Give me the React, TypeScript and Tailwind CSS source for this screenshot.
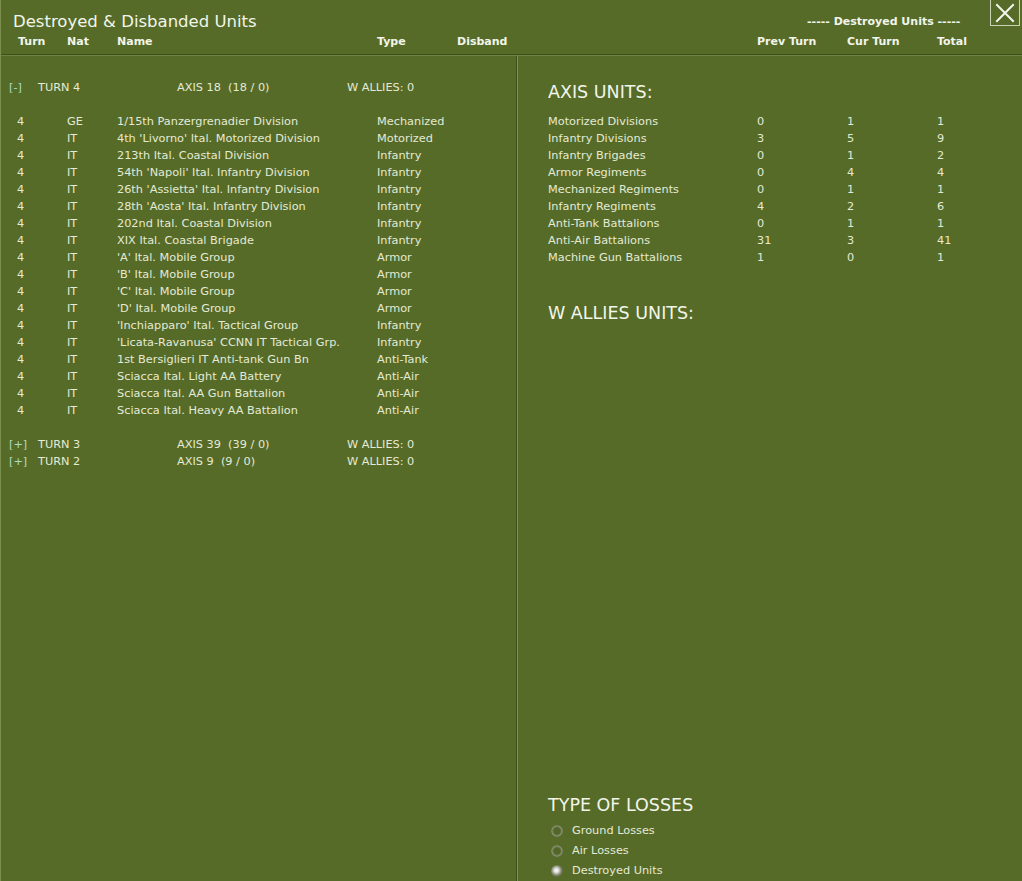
import React from "react";

type Unit = { turn: string; nat: string; name: string; type: string };

const turn4Units: Unit[] = [
  { turn: "4", nat: "GE", name: "1/15th Panzergrenadier Division", type: "Mechanized" },
  { turn: "4", nat: "IT", name: "4th 'Livorno' Ital. Motorized Division", type: "Motorized" },
  { turn: "4", nat: "IT", name: "213th Ital. Coastal Division", type: "Infantry" },
  { turn: "4", nat: "IT", name: "54th 'Napoli' Ital. Infantry Division", type: "Infantry" },
  { turn: "4", nat: "IT", name: "26th 'Assietta' Ital. Infantry Division", type: "Infantry" },
  { turn: "4", nat: "IT", name: "28th 'Aosta' Ital. Infantry Division", type: "Infantry" },
  { turn: "4", nat: "IT", name: "202nd Ital. Coastal Division", type: "Infantry" },
  { turn: "4", nat: "IT", name: "XIX Ital. Coastal Brigade", type: "Infantry" },
  { turn: "4", nat: "IT", name: "'A' Ital. Mobile Group", type: "Armor" },
  { turn: "4", nat: "IT", name: "'B' Ital. Mobile Group", type: "Armor" },
  { turn: "4", nat: "IT", name: "'C' Ital. Mobile Group", type: "Armor" },
  { turn: "4", nat: "IT", name: "'D' Ital. Mobile Group", type: "Armor" },
  { turn: "4", nat: "IT", name: "'Inchiapparo' Ital. Tactical Group", type: "Infantry" },
  { turn: "4", nat: "IT", name: "'Licata-Ravanusa' CCNN IT Tactical Grp.", type: "Infantry" },
  { turn: "4", nat: "IT", name: "1st Bersiglieri IT Anti-tank Gun Bn", type: "Anti-Tank" },
  { turn: "4", nat: "IT", name: "Sciacca Ital. Light AA Battery", type: "Anti-Air" },
  { turn: "4", nat: "IT", name: "Sciacca Ital. AA Gun Battalion", type: "Anti-Air" },
  { turn: "4", nat: "IT", name: "Sciacca Ital. Heavy AA Battalion", type: "Anti-Air" },
];

const axisTotals: [string, string, string, string][] = [
  ["Motorized Divisions", "0", "1", "1"],
  ["Infantry Divisions", "3", "5", "9"],
  ["Infantry Brigades", "0", "1", "2"],
  ["Armor Regiments", "0", "4", "4"],
  ["Mechanized Regiments", "0", "1", "1"],
  ["Infantry Regiments", "4", "2", "6"],
  ["Anti-Tank Battalions", "0", "1", "1"],
  ["Anti-Air Battalions", "31", "3", "41"],
  ["Machine Gun Battalions", "1", "0", "1"],
];

const lossTypes = [
  { label: "Ground Losses", on: false },
  { label: "Air Losses", on: false },
  { label: "Destroyed Units", on: true },
];

function TurnHeader({ open, turn, axis, allies }: { open: boolean; turn: string; axis: string; allies: string }) {
  return (
    <div className="grid h-[17px] grid-cols-[29px_139px_170px_1fr] items-center pl-[8px]">
      <span className="text-[#a9dcc4]">{open ? "[-]" : "[+]"}</span>
      <span>{turn}</span>
      <span className="whitespace-pre">{axis}</span>
      <span>{allies}</span>
    </div>
  );
}

function Radio({ on }: { on: boolean }) {
  return (
    <span
      className={
        on
          ? "h-[12px] w-[12px] rounded-full bg-[radial-gradient(circle_at_45%_45%,#ffffff_0%,#e0e0e0_22%,#7a8262_55%,#343e1a_100%)]"
          : "h-[12px] w-[12px] rounded-full bg-[radial-gradient(circle_at_50%_50%,#52662a_0%,#52662a_36%,#858f69_60%,#2f3918_100%)]"
      }
    />
  );
}

export default function App() {
  return (
    <div className="relative flex h-[881px] w-[1022px] flex-col overflow-hidden border-l border-[#7a8f4c] bg-[#566b28] font-['DejaVu_Sans',sans-serif] text-[11.3px] text-[#e4ead6]">
      {/* window header */}
      <div className="grid h-[55px] shrink-0 grid-cols-[515px_1fr] border-b border-[#3e4e1a]">
        <div className="flex flex-col pt-[10px]">
          <div className="flex h-[24px] items-center pl-[12px] text-[16.5px] leading-none text-[#f2f5ea]">
            Destroyed &amp; Disbanded Units
          </div>
          <div className="grid h-[14px] grid-cols-[49px_50px_260px_80px_1fr] items-center pl-[17px] text-[11px] font-bold text-[#f2f5ea]">
            <span>Turn</span>
            <span>Nat</span>
            <span>Name</span>
            <span>Type</span>
            <span>Disband</span>
          </div>
        </div>
        <div className="flex flex-col pt-[10px]">
          <div className="flex h-[24px] items-center pl-[291px] text-[11px] font-bold text-[#f2f5ea]">
            ----- Destroyed Units -----
          </div>
          <div className="grid h-[14px] grid-cols-[90px_90px_1fr] items-center pl-[241px] text-[11px] font-bold text-[#f2f5ea]">
            <span>Prev Turn</span>
            <span>Cur Turn</span>
            <span>Total</span>
          </div>
        </div>
      </div>
      <div className="h-px shrink-0 bg-[#6f8443]" />

      {/* close button */}
      <button className="absolute right-[2px] top-0 flex h-[26px] w-[30px] items-center justify-center border border-t-0 border-[#c9d3b3]">
        <svg width="20" height="20" viewBox="0 0 20 20">
          <path d="M2 2 L18 18 M18 2 L2 18" stroke="#f4f6ee" strokeWidth="2" strokeLinecap="square" />
        </svg>
      </button>

      <div className="flex min-h-0 flex-1">
        {/* unit list */}
        <div className="flex w-[515px] flex-col pt-[24px]">
          <TurnHeader open turn="TURN 4" axis="AXIS 18  (18 / 0)" allies="W ALLIES: 0" />
          <div className="pt-[17px]">
            {turn4Units.map((u, i) => (
              <div key={i} className="grid h-[17px] grid-cols-[50px_50px_260px_1fr] items-center pl-[16px]">
                <span>{u.turn}</span>
                <span>{u.nat}</span>
                <span className="whitespace-nowrap">{u.name}</span>
                <span>{u.type}</span>
              </div>
            ))}
          </div>
          <div className="pt-[17px]">
            <TurnHeader open={false} turn="TURN 3" axis="AXIS 39  (39 / 0)" allies="W ALLIES: 0" />
            <TurnHeader open={false} turn="TURN 2" axis="AXIS 9  (9 / 0)" allies="W ALLIES: 0" />
          </div>
        </div>

        <div className="w-px bg-[#3e4e1a]" />
        <div className="w-px bg-[#7f9450]" />

        {/* totals */}
        <div className="flex flex-1 flex-col pb-px pl-[30px]">
          <div className="mt-[26px] flex h-[22px] items-center text-[17.5px] leading-none text-[#f2f5ea]">AXIS UNITS:</div>
          <div className="mt-[10px]">
            {axisTotals.map(([label, prev, cur, total]) => (
              <div key={label} className="grid h-[17px] grid-cols-[209px_90px_90px_1fr] items-center">
                <span>{label}</span>
                <span>{prev}</span>
                <span>{cur}</span>
                <span>{total}</span>
              </div>
            ))}
          </div>
          <div className="mt-[36px] flex h-[22px] items-center text-[17.5px] leading-none text-[#f2f5ea]">W ALLIES UNITS:</div>

          <div className="mt-auto flex h-[22px] items-center text-[17.5px] leading-none text-[#f2f5ea]">TYPE OF LOSSES</div>
          <div className="mb-[-1px] mt-[4px] flex flex-col">
            {lossTypes.map((t) => (
              <div key={t.label} className="flex h-[20px] items-center gap-[9px] pl-[3px]">
                <Radio on={t.on} />
                <span>{t.label}</span>
              </div>
            ))}
          </div>
        </div>
      </div>
    </div>
  );
}
